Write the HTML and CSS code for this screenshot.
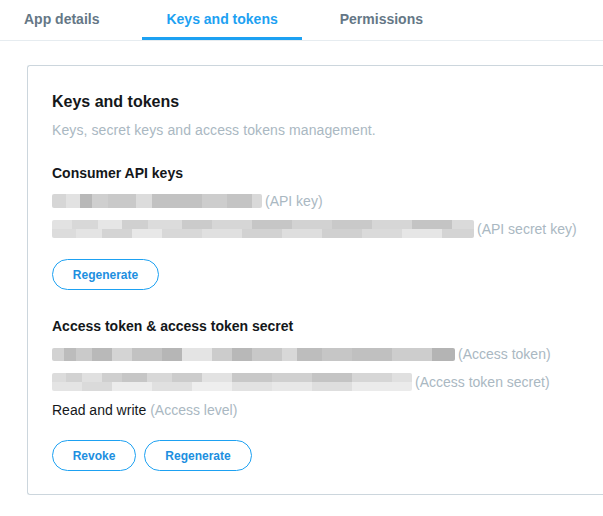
FILE: index.html
```html
<!DOCTYPE html>
<html>
<head>
<meta charset="utf-8">
<link rel="stylesheet" href="styles.css">
</head>
<body>
<nav class="tabs">
  <a class="tab">App details</a>
  <a class="tab active">Keys and tokens</a>
  <a class="tab">Permissions</a>
</nav>
<section class="card">
  <h2 class="title">Keys and tokens</h2>
  <p class="subtitle">Keys, secret keys and access tokens management.</p>

  <h3 class="heading first">Consumer API keys</h3>
  <div class="row"><span class="blur blur-a"></span><span class="note">(API key)</span></div>
  <div class="row"><span class="blur blur-b"></span><span class="note">(API secret key)</span></div>
  <div class="buttons"><button class="btn regen1">Regenerate</button></div>

  <h3 class="heading">Access token &amp; access token secret</h3>
  <div class="row"><span class="blur blur-c"></span><span class="note">(Access token)</span></div>
  <div class="row"><span class="blur blur-d"></span><span class="note">(Access token secret)</span></div>
  <div class="row">Read and write <span class="note tight">(Access level)</span></div>
  <div class="buttons"><button class="btn revoke">Revoke</button><button class="btn regen2">Regenerate</button></div>
</section>
</body>
</html>
```

FILE: styles.css
```css
html, body {
  margin: 0;
  padding: 0;
  background: #ffffff;
  font-family: "Liberation Sans", Arial, sans-serif;
  color: #14171a;
  overflow: hidden;
}

.tabs {
  display: flex;
  height: 40px;
  border-bottom: 1px solid #e6ecf0;
  box-sizing: content-box;
}

.tab {
  display: flex;
  align-items: center;
  height: 37px;
  padding: 0 24px;
  font-size: 14px;
  font-weight: bold;
  color: #657786;
  border-bottom: 3px solid transparent;
}

.tab.active {
  margin-left: 19px;
  margin-right: 14px;
  color: #1da1f2;
  border-bottom-color: #1da1f2;
}

.card {
  margin: 24px 0 0 27px;
  border: 1px solid #ccd6dd;
  border-right: none;
  border-radius: 3px 0 0 3px;
  padding: 26px 24px 23px 24px;
}

.title {
  margin: 0;
  font-size: 16px;
  line-height: 20px;
  font-weight: bold;
}

.subtitle {
  margin: 8px 0 0 0;
  font-size: 14px;
  line-height: 20px;
  color: #aab8c2;
  letter-spacing: 0.1px;
}

.heading {
  margin: 26px 0 4px 0;
  font-size: 14px;
  line-height: 20px;
  font-weight: bold;
}

.heading.first {
  margin-top: 23px;
}

.row {
  display: flex;
  align-items: center;
  height: 28px;
  font-size: 14px;
  line-height: 28px;
}

.note {
  color: #aab8c2;
  margin-left: 3px;
}

.note.tight {
  margin-left: 4px;
}

.blur {
  display: inline-block;
  height: 14px;
  border-radius: 2px;
}

.blur-a {
  width: 210px;
  background: linear-gradient(90deg,
    #d6d6d6 0 14px, #e2e2e2 14px 28px, #b8b8b8 28px 40px, #cfcfcf 40px 56px,
    #c9c9c9 56px 84px, #dcdcdc 84px 100px, #c2c2c2 100px 150px, #cdcdcd 150px 175px,
    #c4c4c4 175px 200px, #d9d9d9 200px 210px);
}

.blur-b {
  width: 422px;
  height: 18px;
  background:
    linear-gradient(90deg,
      #e2e2e2 0 20px, #d8d8d8 20px 46px, #e6e6e6 46px 70px, #d0d0d0 70px 96px,
      #dcdcdc 96px 130px, #cbcbcb 130px 160px, #d6d6d6 160px 200px, #c6c6c6 200px 240px,
      #d2d2d2 240px 280px, #c9c9c9 280px 320px, #d6d6d6 320px 360px, #c4c4c4 360px 400px,
      #dadada 400px 422px) top / 100% 50% no-repeat,
    linear-gradient(90deg,
      #dcdcdc 0 24px, #e4e4e4 24px 50px, #d4d4d4 50px 80px, #e8e8e8 80px 110px,
      #d8d8d8 110px 150px, #e0e0e0 150px 190px, #d2d2d2 190px 230px, #dedede 230px 270px,
      #d0d0d0 270px 310px, #dadada 310px 350px, #e6e6e6 350px 390px, #d4d4d4 390px 422px) bottom / 100% 50% no-repeat;
}

.blur-c {
  width: 403px;
  height: 13px;
  background: linear-gradient(90deg,
    #d2d2d2 0 12px, #bcbcbc 12px 24px, #cacaca 24px 40px, #b9b9b9 40px 60px,
    #d4d4d4 60px 80px, #c2c2c2 80px 110px, #b6b6b6 110px 130px, #e4e4e4 130px 160px,
    #cccccc 160px 180px, #b8b8b8 180px 200px, #c8c8c8 200px 230px, #d8d8d8 230px 245px,
    #bdbdbd 245px 270px, #c6c6c6 270px 300px, #c0c0c0 300px 340px, #cdcdcd 340px 380px,
    #b4b4b4 380px 403px);
}

.blur-d {
  width: 360px;
  height: 18px;
  background:
    linear-gradient(90deg,
      #dcdcdc 0 14px, #d2d2d2 14px 30px, #e0e0e0 30px 50px, #cfcfcf 50px 70px,
      #c6c6c6 70px 95px, #d8d8d8 95px 120px, #cccccc 120px 150px, #e2e2e2 150px 180px,
      #c8c8c8 180px 220px, #d0d0d0 220px 260px, #c4c4c4 260px 300px, #d6d6d6 300px 340px,
      #e0e0e0 340px 360px) top / 100% 50% no-repeat,
    linear-gradient(90deg,
      #e4e4e4 0 30px, #dadada 30px 60px, #ececec 60px 100px, #e0e0e0 100px 140px,
      #eeeeee 140px 180px, #e2e2e2 180px 220px, #e8e8e8 220px 260px, #dedede 260px 300px,
      #ebebeb 300px 360px) bottom / 100% 50% no-repeat;
}

.buttons {
  display: flex;
  gap: 8px;
  margin-top: 17px;
}

.row + .buttons {
  margin-top: 16px;
}

.btn {
  height: 31px;
  border: 1px solid #1da1f2;
  border-radius: 16px;
  background: #ffffff;
  color: #1d8fe0;
  font-family: "Liberation Sans", Arial, sans-serif;
  font-size: 12px;
  font-weight: bold;
  padding: 0;
  box-sizing: border-box;
}

.regen1 { width: 107px; }
.revoke { width: 84px; }
.regen2 { width: 108px; }
```
